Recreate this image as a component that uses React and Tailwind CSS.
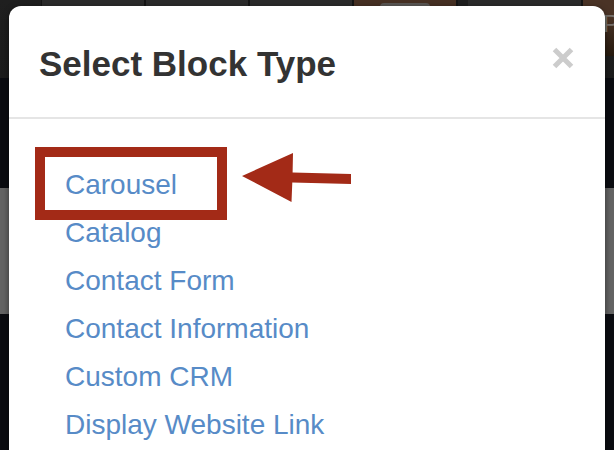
const blockTypes = [
  'Carousel',
  'Catalog',
  'Contact Form',
  'Contact Information',
  'Custom CRM',
  'Display Website Link',
];

const Highlight = () => (
  <span className="pointer-events-none absolute -top-[14px] -left-[30px] flex items-start gap-[15px]">
    <span className="h-[73px] w-[192px] border-10 border-[#a32a17]" />
    <svg className="mt-[5px] h-[51px] w-[110px]" viewBox="0 0 110 51" fill="#a32a17" aria-hidden="true">
      <path d="M0 24 L51 1 L50.6 20.5 L109 22 L109 32 L50.3 30.5 L49.5 50 Z" />
    </svg>
  </span>
);

// Dimmed editor that shows around the dialog
const Backdrop = () => (
  <div className="absolute inset-0 flex flex-col bg-[#0b0c11]" aria-hidden="true">
    <div className="flex h-[78px] shrink-0 bg-linear-to-b from-[#1f1f1f] to-[#1c1c1c]">
      <div className="w-[42px] border-r border-[#151515]" />
      <div className="grid flex-1 grid-cols-4 gap-[2px] bg-[#151515]">
        <div className="h-14 bg-[#2b2b2b]" />
        <div className="h-14 bg-[#2b2b2b]" />
        <div className="h-14 bg-[#2b2b2b]" />
        <div className="h-14 bg-[#463023] px-[26px] pt-[3px]">
          <div className="h-4 rounded-sm bg-[#5a5754]" />
        </div>
      </div>
      <div className="w-3 border-l-2 border-[#151515] bg-[#1f1f1f]" />
      <div className="h-14 w-[113px] bg-[#2b2b2b]" />
      <div className="h-14 w-[33px] overflow-hidden border-l-2 border-[#151515] bg-linear-to-b from-[#4a3326] from-30% to-[#261a0e] pt-[10px] pl-5 text-2xl/7 text-[#77716c]">
        P
      </div>
    </div>
    <div className="h-[110px] shrink-0" />
    <div className="h-[126px] shrink-0 bg-[#646464]" />
  </div>
);

const App = () => (
  <div className="relative flex min-h-screen overflow-hidden px-[9px] pt-[6px] font-['Liberation_Sans',Arial,sans-serif]">
    <Backdrop />
    <section
      role="dialog"
      aria-labelledby="dialog-title"
      className="relative flex-1 rounded-t-xl bg-white shadow-[0_2px_6px_rgba(0,0,0,0.5)]"
    >
      <header className="flex items-center justify-between border-b-2 border-[#e5e5e5] px-[30px] pt-[34px] pb-[29px]">
        <h1 id="dialog-title" className="text-[35px]/[48px] font-bold text-[#333]">
          Select Block Type
        </h1>
        <button type="button" aria-label="Close" className="mb-3 cursor-pointer text-[#cccccc]">
          <svg className="size-[24px]" viewBox="0 0 24 24" stroke="currentColor" strokeWidth="5" aria-hidden="true">
            <path d="M3.5 3.5 L20.5 20.5 M20.5 3.5 L3.5 20.5" />
          </svg>
        </button>
      </header>
      <ul className="pt-[42px] pl-14 text-[28px]/[48px]">
        {blockTypes.map((name, i) => (
          <li key={name} className="relative">
            <a href="#" className="text-[#578bc7] hover:underline">{name}</a>
            {i === 0 && <Highlight />}
          </li>
        ))}
      </ul>
    </section>
  </div>
);

export default App;
